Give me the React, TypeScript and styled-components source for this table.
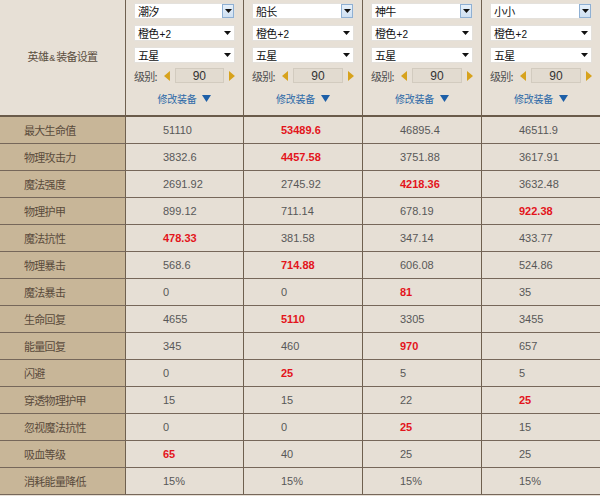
import React from "react";
import styled, { createGlobalStyle } from "styled-components";

const Global = createGlobalStyle`
  html, body { margin: 0; padding: 0; background: #e6dfd5; }
  body { font-family: "Liberation Sans", Arial, "Noto Sans CJK SC", sans-serif; font-size: 12px; }
`;

const cjk = `"Noto Sans CJK SC", sans-serif`;
const num = `"Liberation Sans", Arial, sans-serif`;

const Grid = styled.div`
  display: grid;
  grid-template-columns: 126px 118px 119px 119px 118px;
  width: 600px;
  background: #e6dfd5;
`;

const HeadCell = styled.div<{ $last?: boolean }>`
  box-sizing: border-box;
  height: 117px;
  background: #e7e0d6;
  border-right: ${(p) => (p.$last ? "none" : "1px solid #6f604f")};
  border-bottom: 2px solid #6a5b4a;
`;

const TitleCell = styled(HeadCell)`
  display: flex;
  align-items: center;
  justify-content: center;
  color: #5b4e40;
  font-family: ${cjk};
  font-size: 11px;
  letter-spacing: -0.7px;
  padding-bottom: 4px;
`;

const Amp = styled.span`
  font-size: 9px;
  letter-spacing: 0;
  font-family: "Liberation Sans", sans-serif;
  margin: 0 1px;
`;

const HeroCol = styled(HeadCell)`
  display: flex;
  flex-direction: column;
  padding: 3px 8px 0 8px;
  gap: 6px;
`;

const Select = styled.div`
  box-sizing: border-box;
  height: 16px;
  background: #fff;
  border: 1px solid #e4e1dc;
  display: flex;
  align-items: center;
  justify-content: space-between;
  padding-left: 3px;
  font-family: ${cjk};
  font-size: 11px;
  letter-spacing: -0.7px;
  color: #111;
`;

const SelectBtn = styled.div<{ $active?: boolean }>`
  box-sizing: border-box;
  width: 12px;
  height: 14px;
  display: flex;
  align-items: center;
  justify-content: center;
  background: ${(p) => (p.$active ? "linear-gradient(#e6f0fa, #cfe0f2)" : "transparent")};
  border: ${(p) => (p.$active ? "1px solid #8fb0d3" : "1px solid transparent")};
  margin-right: ${(p) => (p.$active ? "0" : "1px")};
`;

const Plus = styled.span`
  font-family: "Liberation Sans", sans-serif;
  font-size: 10px;
  letter-spacing: 0;
  margin-left: 1px;
`;

const LevelRow = styled.div`
  display: flex;
  align-items: center;
  height: 15px;
  margin-top: -1px;
  color: #4f4f4f;
  font-family: ${cjk};
  font-size: 11px;
  letter-spacing: -0.7px;
`;

const LevelLabel = styled.span`
  width: 30px;
`;

const LevelInput = styled.div`
  box-sizing: border-box;
  width: 50px;
  height: 15px;
  margin: 0 5px;
  border: 1px solid #d2cbbf;
  background: #e2dbd0;
  display: flex;
  align-items: center;
  justify-content: center;
  font-family: "Liberation Sans", sans-serif;
  font-size: 12px;
  letter-spacing: 0;
  color: #333;
`;

const EditLink = styled.div`
  display: flex;
  align-items: center;
  justify-content: center;
  gap: 6px;
  margin-top: 2px;
  color: #2e6aa8;
  font-family: ${cjk};
  font-size: 10px;
  letter-spacing: -0.3px;
`;

const LabelCell = styled.div`
  box-sizing: border-box;
  height: 27px;
  background: #c8b698;
  border-right: 1px solid #6f604f;
  border-bottom: 1px solid #76675a;
  display: flex;
  align-items: center;
  padding-left: 24px;
  color: #5a4b3c;
  font-family: ${cjk};
  font-size: 11px;
  letter-spacing: -0.7px;
`;

const ValueCell = styled.div<{ $last?: boolean; $best?: boolean }>`
  box-sizing: border-box;
  height: 27px;
  background: #e6dfd5;
  border-right: ${(p) => (p.$last ? "none" : "1px solid #6f604f")};
  border-bottom: 1px solid #76675a;
  display: flex;
  align-items: center;
  padding-left: 37px;
  font-family: ${num};
  font-size: 11px;
  font-weight: ${(p) => (p.$best ? 700 : 400)};
  color: ${(p) => (p.$best ? "#e3141b" : "#585858")};
`;

const Caret = () => (
  <svg width="7" height="4" viewBox="0 0 7 4">
    <polygon points="0,0 7,0 3.5,4" fill="#111" />
  </svg>
);

const Arrow = ({ dir }: { dir: "l" | "r" }) => (
  <svg width="6" height="10" viewBox="0 0 6 10">
    <polygon points={dir === "l" ? "6,0 6,10 0,5" : "0,0 0,10 6,5"} fill="#d7a21c" />
  </svg>
);

const Down = () => (
  <svg width="9" height="7" viewBox="0 0 9 7">
    <polygon points="0,0 9,0 4.5,7" fill="#1d5fa8" />
  </svg>
);

const heroes = ["潮汐", "船长", "神牛", "小小"];

const rows: { name: string; vals: string[]; best: number }[] = [
  { name: "最大生命值", vals: ["51110", "53489.6", "46895.4", "46511.9"], best: 1 },
  { name: "物理攻击力", vals: ["3832.6", "4457.58", "3751.88", "3617.91"], best: 1 },
  { name: "魔法强度", vals: ["2691.92", "2745.92", "4218.36", "3632.48"], best: 2 },
  { name: "物理护甲", vals: ["899.12", "711.14", "678.19", "922.38"], best: 3 },
  { name: "魔法抗性", vals: ["478.33", "381.58", "347.14", "433.77"], best: 0 },
  { name: "物理暴击", vals: ["568.6", "714.88", "606.08", "524.86"], best: 1 },
  { name: "魔法暴击", vals: ["0", "0", "81", "35"], best: 2 },
  { name: "生命回复", vals: ["4655", "5110", "3305", "3455"], best: 1 },
  { name: "能量回复", vals: ["345", "460", "970", "657"], best: 2 },
  { name: "闪避", vals: ["0", "25", "5", "5"], best: 1 },
  { name: "穿透物理护甲", vals: ["15", "15", "22", "25"], best: 3 },
  { name: "忽视魔法抗性", vals: ["0", "0", "25", "15"], best: 2 },
  { name: "吸血等级", vals: ["65", "40", "25", "25"], best: 0 },
  { name: "消耗能量降低", vals: ["15%", "15%", "15%", "15%"], best: -1 },
];

export default function App() {
  return (
    <>
      <Global />
      <Grid>
        <TitleCell>
          <span>
            英雄<Amp>&amp;</Amp>装备设置
          </span>
        </TitleCell>
        {heroes.map((h, i) => (
          <HeroCol key={h} $last={i === 3}>
            <Select>
              <span>{h}</span>
              <SelectBtn $active>
                <Caret />
              </SelectBtn>
            </Select>
            <Select>
              <span>
                橙色<Plus>+2</Plus>
              </span>
              <SelectBtn>
                <Caret />
              </SelectBtn>
            </Select>
            <Select>
              <span>五星</span>
              <SelectBtn>
                <Caret />
              </SelectBtn>
            </Select>
            <LevelRow>
              <LevelLabel>级别:</LevelLabel>
              <Arrow dir="l" />
              <LevelInput>90</LevelInput>
              <Arrow dir="r" />
            </LevelRow>
            <EditLink>
              <span>修改装备</span>
              <Down />
            </EditLink>
          </HeroCol>
        ))}
        {rows.map((r) => (
          <React.Fragment key={r.name}>
            <LabelCell>{r.name}</LabelCell>
            {r.vals.map((v, i) => (
              <ValueCell key={i} $last={i === 3} $best={i === r.best}>
                {v}
              </ValueCell>
            ))}
          </React.Fragment>
        ))}
      </Grid>
    </>
  );
}
